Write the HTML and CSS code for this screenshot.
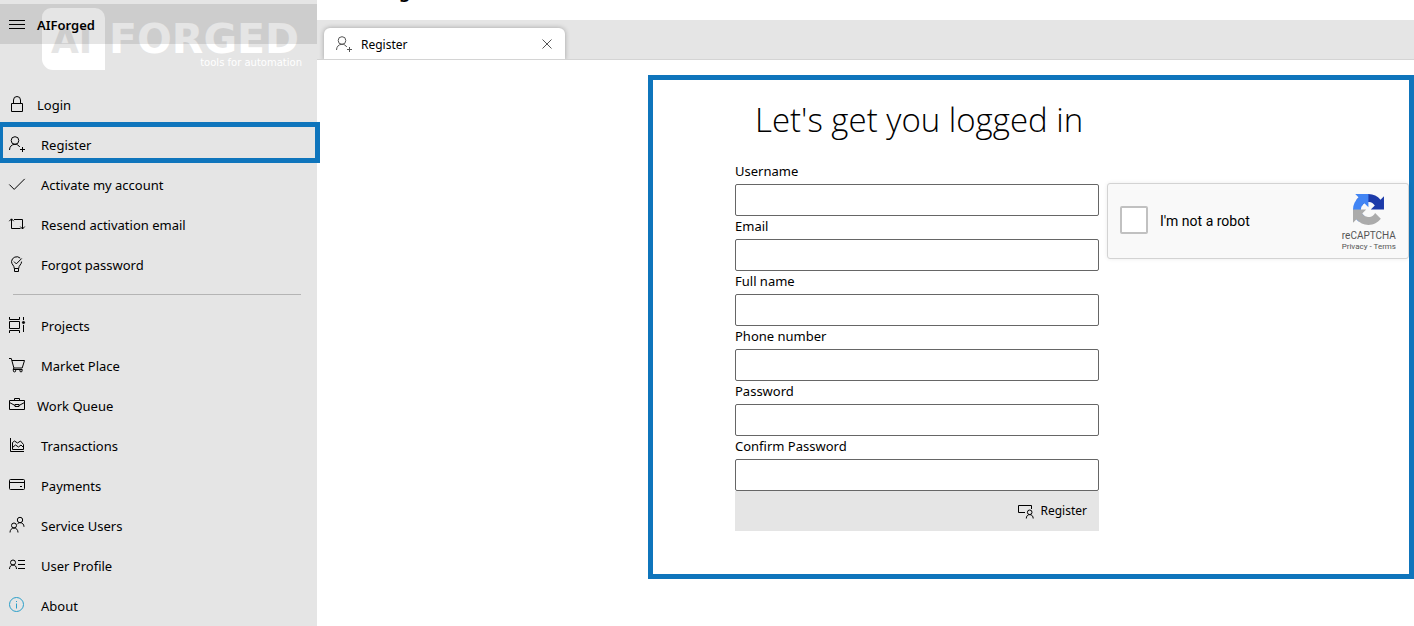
FILE: index.html
```
<!DOCTYPE html>
<html lang="en">
<head>
<meta charset="utf-8">
<title>AIForged</title>
<link rel="stylesheet" href="styles.css">
</head>
<body>
<div class="app">
  <aside class="sidebar">
    <svg class="brand" width="264" height="66" viewBox="0 0 264 66" role="img" aria-label="AIForged, tools for automation">
      <path d="M10 1h44a10 10 0 0 1 10 10v52H12A11 11 0 0 1 1 52V10a9 9 0 0 1 9-9z" class="brand-mark"/>
      <text x="10" y="46" class="brand-ai">AI</text>
      <text x="68" y="46" class="brand-name">FORGED</text>
      <text x="261" y="59" class="brand-tag">tools for automation</text>
    </svg>
    <header class="sidebar-head">
      <button class="menu-button" type="button" aria-label="Menu">
        <svg class="icon" viewBox="0 0 16 16"><path d="M0 3.500h16M0 7.500h16M0 11.500h16"/></svg>
      </button>
      <span class="app-name">AIForged</span>
    </header>
    <nav class="nav">
      <a class="nav-item nav-item-tight" href="#login">
        <svg class="icon" viewBox="0 0 16 16"><path d="M2.500 7.500h11v8h-11zM4.500 7V4a3.500 3.500 0 0 1 7 0v3"/></svg>Login</a>
      <a class="nav-item nav-item-marked" href="#register">
        <svg class="icon" viewBox="0 0 16 16"><circle cx="6" cy="4.500" r="3.800"/><path d="M.5 14C.6 10.500 2.800 8.300 6 8.300c2.200 0 3.800 1 4.700 2.700M13.500 11v5M11 13.500h5"/></svg>Register</a>
      <a class="nav-item" href="#activate">
        <svg class="icon" viewBox="0 0 16 16"><path d="M.3 8.500l4.900 4.900L15.700 2.900"/></svg>Activate my account</a>
      <a class="nav-item" href="#resend">
        <svg class="icon" viewBox="0 0 16 16"><path d="M.3 5.200l2.200-2.400 2.200 2.400M2.500 3v9.500h9M5 3.500h8.500V13M11.300 10.600l2.200 2.400 2.200-2.400"/></svg>Resend activation email</a>
      <a class="nav-item" href="#forgot">
        <svg class="icon" viewBox="0 0 16 16"><path d="M11.300 2.200A5.200 5.200 0 0 0 2.500 5.600c0 2.900 2.800 3.800 2.800 6.900h4.400c0-3.100 2.900-4 2.900-6.900M5.500 12.500v3h4v-3M5 5.600l2.300 2.300 5.400-5.400"/></svg>Forgot password</a>
      <hr class="nav-rule">
      <a class="nav-item" href="#projects">
        <svg class="icon" viewBox="0 0 16 16"><path d="M.5 0v2.500h10V0M.5 4.500h10v7H.5zM.5 16v-2.500h10V16M14.500 0v3M14.500 8v7"/><circle cx="14.500" cy="5.500" r="1.100" fill="currentColor"/></svg>Projects</a>
      <a class="nav-item" href="#market">
        <svg class="icon" viewBox="0 0 16 16"><path d="M0 1.500h2.300l2.600 9.500h8.300l2.300-7.500H3M4.900 11l-.8 1.500h9.400"/><circle cx="5.500" cy="13.700" r="1.200"/><circle cx="12" cy="13.700" r="1.200"/></svg>Market Place</a>
      <a class="nav-item nav-item-tight" href="#queue">
        <svg class="icon" viewBox="0 0 16 16"><path d="M.5 3.500h15v9H.5zM5.500 3.500v-2h5v2M.5 5.500L6 8.500M15.500 5.500L10 8.500M6 7.500h4v2H6z"/></svg>Work Queue</a>
      <a class="nav-item" href="#transactions">
        <svg class="icon" viewBox="0 0 16 16"><path d="M1.500 1v13.500H15M3.500 12.500v-7l2-1.500 3 2 3-2 3 3.500v5zM3.500 10.500l3-2.500 3 2L12 8l2.500 2.500"/></svg>Transactions</a>
      <a class="nav-item" href="#payments">
        <svg class="icon" viewBox="0 0 16 16"><path d="M1.500 2.500h13a1 1 0 0 1 1 1v8a1 1 0 0 1-1 1h-13a1 1 0 0 1-1-1v-8a1 1 0 0 1 1-1zM.5 5.500h15M11 9.500h2"/></svg>Payments</a>
      <a class="nav-item" href="#users">
        <svg class="icon" viewBox="0 0 16 16"><circle cx="5" cy="8.500" r="2.500"/><path d="M1 15.500C1 12.800 2.700 11 5 11s4 1.800 4 4.500"/><circle cx="11" cy="3" r="2.700"/><path d="M8.300 7.200C9 6.200 10 5.700 11 5.700c2.300 0 4 1.500 4 4.100"/></svg>Service Users</a>
      <a class="nav-item" href="#profile">
        <svg class="icon" viewBox="0 0 16 16"><circle cx="4" cy="5.500" r="2.500"/><path d="M.5 12C.5 9.500 2 8 4 8s3.500 1.500 3.500 4M9 3.500h7M9 7.500h7M9 11.500h7"/></svg>User Profile</a>
      <a class="nav-item" href="#about">
        <svg class="icon icon-info" viewBox="0 0 16 16"><circle cx="7.500" cy="7.500" r="7"/><path d="M7.500 6.500v5M7.500 4v1"/></svg>About</a>
    </nav>
  </aside>

  <main class="main">
    <h1 class="page-title">Register</h1>
    <div class="tabs">
      <div class="tab">
        <svg class="icon" viewBox="0 0 16 16"><circle cx="6" cy="4.500" r="3.800"/><path d="M.5 14C.6 10.500 2.800 8.300 6 8.300c2.200 0 3.800 1 4.700 2.700M13.500 11v5M11 13.500h5"/></svg>
        <span class="tab-label">Register</span>
        <button class="tab-close" type="button" aria-label="Close tab">
          <svg width="10" height="10" viewBox="0 0 10 10"><path d="M.5.5l9 9M9.500.5l-9 9"/></svg>
        </button>
      </div>
    </div>

    <section class="panel">
      <h2 class="panel-title">Let's get you logged in</h2>
      <div class="columns">
        <form class="form">
          <label class="label" for="username">Username</label>
          <input class="field" id="username" type="text">
          <label class="label" for="email">Email</label>
          <input class="field" id="email" type="email">
          <label class="label" for="fullname">Full name</label>
          <input class="field" id="fullname" type="text">
          <label class="label" for="phone">Phone number</label>
          <input class="field" id="phone" type="tel">
          <label class="label" for="password">Password</label>
          <input class="field" id="password" type="password">
          <label class="label" for="confirm">Confirm Password</label>
          <input class="field" id="confirm" type="password">
          <div class="form-actions">
            <button class="submit" type="button">
              <svg class="icon" viewBox="0 0 16 16"><path d="M7 9.500H.5v-7h13V6"/><circle cx="11.700" cy="9.300" r="2.300"/><path d="M8.300 15.500c0-2.300 1.300-3.900 3.400-3.900s3.500 1.600 3.500 3.900"/></svg>
              Register
            </button>
          </div>
        </form>

        <div class="captcha">
          <input class="captcha-box" id="robot" type="checkbox">
          <label class="captcha-label" for="robot">I'm not a robot</label>
          <div class="captcha-brand">
            <svg width="31" height="31" viewBox="0 0 64 64">
              <path fill="#1c3aa9" d="M64 31.955l-.033-1.370V4.687l-7.160 7.160C50.948 4.674 42.033.093 32.050.093c-10.400 0-19.622 4.960-25.458 12.640l11.736 11.860a15.550 15.550 0 0 1 4.754-5.334c2.050-1.600 4.952-2.906 8.968-2.906.485 0 .860.057 1.135.163 4.976.393 9.288 3.140 11.828 7.124l-8.307 8.307L64 31.953"/>
              <path fill="#4285f4" d="M31.862.094l-1.370.033H4.594l7.160 7.160C4.580 13.147 0 22.060 0 32.046c0 10.400 4.960 19.622 12.640 25.458L24.500 45.768a15.550 15.550 0 0 1-5.334-4.754c-1.600-2.050-2.906-4.952-2.906-8.968 0-.485.057-.860.163-1.135.393-4.976 3.140-9.288 7.124-11.828l8.307 8.307L31.860.095"/>
              <path fill="#ababab" d="M.001 32.045l.033 1.370v25.898l7.160-7.160c5.860 7.173 14.774 11.754 24.760 11.754 10.400 0 19.622-4.960 25.458-12.640l-11.736-11.860a15.550 15.550 0 0 1-4.754 5.334c-2.050 1.600-4.952 2.906-8.968 2.906-.485 0-.860-.057-1.135-.163-4.976-.393-9.288-3.140-11.828-7.124l8.307-8.307c-10.522.040-22.400.066-27.295-.005"/>
            </svg>
            <span class="captcha-name">reCAPTCHA</span>
            <span class="captcha-links"><a href="#privacy">Privacy</a> - <a href="#terms">Terms</a></span>
          </div>
        </div>
      </div>
    </section>
  </main>
</div>
</body>
</html>
```

FILE: styles.css
```
* {
  box-sizing: border-box;
}

body {
  margin: 0;
  background: #fff;
  color: #000;
  font: 13px/20px "Noto Sans", "Open Sans", sans-serif;
}

.app {
  display: flex;
  height: 100vh;
  overflow: hidden;
}

.icon {
  flex: none;
  width: 16px;
  height: 16px;
  overflow: visible;
  fill: none;
  stroke: currentColor;
  stroke-width: 1;
}

/* Sidebar */
.sidebar {
  position: relative;
  z-index: 1;
  flex: none;
  width: 317px;
  padding-top: 4px;
  background: #e5e5e5;
}

.brand {
  position: absolute;
  top: 7px;
  left: 41px;
}

.brand-mark,
.brand-name,
.brand-tag {
  fill: #fff;
}

.brand-ai {
  fill: #e5e5e5;
  font: bold 36px "DejaVu Sans", sans-serif;
}

.brand-name {
  font: bold 41px "DejaVu Sans", sans-serif;
}

.brand-tag {
  font: 10px "DejaVu Sans", sans-serif;
  text-anchor: end;
}

.sidebar-head {
  position: relative;
  display: flex;
  align-items: center;
  gap: 12px;
  height: 40px;
  padding: 2px 0 0 9px;
  background: rgba(0, 0, 0, 0.1);
}

.menu-button,
.tab-close,
.submit {
  display: flex;
  align-items: center;
  padding: 0;
  border: 0;
  background: none;
  color: inherit;
  font: inherit;
}

.app-name {
  font-weight: 600;
}

.nav {
  margin-top: 41px;
}

.nav-item {
  display: flex;
  align-items: center;
  gap: 16px;
  height: 40px;
  padding-left: 9px;
  color: inherit;
  text-decoration: none;
}

.nav-item .icon {
  margin-bottom: 2px;
}

.nav-item-tight {
  gap: 12px;
}

.nav-item-marked {
  position: relative;
}

.nav-item-marked::after {
  content: "";
  position: absolute;
  inset: -3px -3px 2px 0;
  border: 5px solid #0f75bc;
  border-left-width: 3px;
}

.nav-rule {
  height: 1px;
  margin: 9px 16px 11px 13px;
  border: 0;
  background: #b4b4b4;
}

.icon-info {
  color: #2a9fc9;
}

/* Main area */
.main {
  display: flex;
  flex: 1;
  flex-direction: column;
  min-width: 0;
}

.page-title {
  display: flex;
  flex: none;
  align-items: flex-end;
  height: 20px;
  margin: 0;
  padding: 0 0 17px 60px;
  overflow: hidden;
  font-size: 18px;
  font-weight: 600;
  line-height: 24px;
}

.tabs {
  display: flex;
  flex: none;
  height: 40px;
  padding: 8px 7px 0;
  overflow: hidden;
  border-bottom: 1px solid #d4d4d4;
  background: #e5e5e5;
}

.tab {
  display: flex;
  align-items: center;
  width: 241px;
  height: 32px;
  padding: 0 13px 0 12px;
  border-radius: 6px 6px 0 0;
  background: #fff;
  box-shadow: 0 0 5px rgba(0, 0, 0, 0.3);
  font-size: 12px;
}

.tab .icon,
.tab-close {
  color: #555;
}

.tab-label {
  flex: 1;
  margin-left: 9px;
  padding-top: 2px;
}

.tab-close svg {
  stroke: currentColor;
}

.panel {
  margin: 15px 0 0 331px;
  padding: 16px 0 43px 82px;
  border: 5px solid #0f75bc;
}

.panel-title {
  margin: 0 0 17px 20px;
  font: 300 33px/48px "Open Sans", "Noto Sans", sans-serif;
}

.columns {
  display: flex;
  align-items: flex-start;
  gap: 8px;
}

.form {
  display: flex;
  flex: 1 1 364px;
  flex-direction: column;
  min-width: 0;
}

.label {
  height: 23px;
}

.field {
  width: 100%;
  height: 32px;
  padding: 4px 8px;
  border: 1px solid #666;
  border-radius: 2px;
  background: #fff;
  font: inherit;
}

.form-actions {
  display: flex;
  justify-content: flex-end;
  height: 40px;
  padding-right: 12px;
  background: #e5e5e5;
}

.submit {
  gap: 6px;
  font-size: 12px;
}

/* Captcha */
.captcha {
  display: flex;
  flex: none;
  align-items: center;
  width: 302px;
  height: 76px;
  margin-top: 22px;
  padding: 0 12px;
  border: 1px solid #d3d3d3;
  border-radius: 3px;
  background: #f9f9f9;
  box-shadow: 0 0 4px rgba(0, 0, 0, 0.08);
  font-family: Roboto, sans-serif;
}

.captcha-box {
  width: 28px;
  height: 28px;
  margin: 0 12px 2px 0;
  appearance: none;
  border: 2px solid #c1c1c1;
  border-radius: 2px;
  background: #fff;
}

.captcha-label {
  flex: 1;
  font-size: 14px;
}

.captcha-brand {
  display: flex;
  flex-direction: column;
  align-items: center;
  padding-top: 4px;
  color: #555;
}

.captcha-name {
  margin-top: 5px;
  font-size: 10px;
  line-height: 12px;
}

.captcha-links {
  font-size: 8px;
  line-height: 10px;
}

.captcha-links a {
  color: inherit;
  text-decoration: none;
}
```
